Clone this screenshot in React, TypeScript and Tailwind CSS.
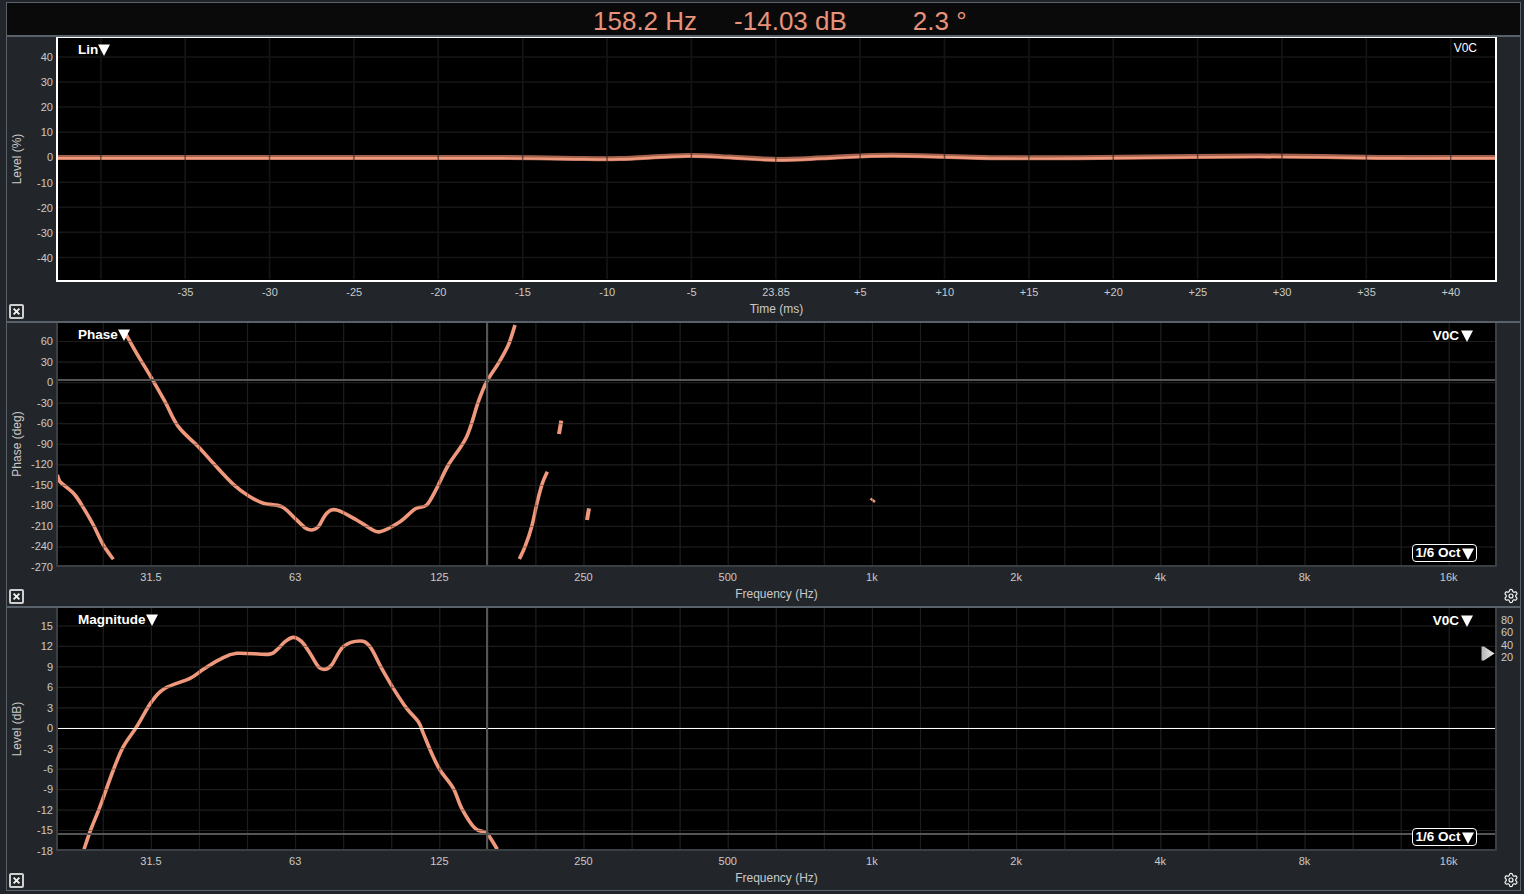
import type { ReactNode } from "react";
import { Settings } from "lucide-react";

type Pt = [number, number];

const CURVE = "#ef987b";
const FREQS = ["31.5", "63", "125", "250", "500", "1k", "2k", "4k", "8k", "16k"];
const TIMES = ["-35", "-30", "-25", "-20", "-15", "-10", "-5", "23.85", "+5", "+10", "+15", "+20", "+25", "+30", "+35", "+40"];

const range = (start: number, step: number, count: number) =>
  Array.from({ length: count }, (_, i) => start + step * i);

// catmull-rom through the traced points
function smooth(points: Pt[]) {
  let d = `M${points[0][0]} ${points[0][1]}`;
  for (let i = 0; i < points.length - 1; i++) {
    const p0 = points[i - 1] ?? points[i];
    const p1 = points[i];
    const p2 = points[i + 1];
    const p3 = points[i + 2] ?? p2;
    const c1x = p1[0] + (p2[0] - p0[0]) / 6;
    const c1y = p1[1] + (p2[1] - p0[1]) / 6;
    const c2x = p2[0] - (p3[0] - p1[0]) / 6;
    const c2y = p2[1] - (p3[1] - p1[1]) / 6;
    d += `C${c1x} ${c1y} ${c2x} ${c2y} ${p2[0]} ${p2[1]}`;
  }
  return d;
}

const zoomed = (ox: number, oy: number, pts: Pt[]): Pt[] =>
  pts.map(([x, y]) => [ox + x / 3, oy + y / 3]);

const phaseA = zoomed(50, 325, [[22, 450], [30, 470], [50, 487], [75, 510], [100, 548], [130, 600], [160, 660], [190, 703]]);
const phaseB = zoomed(50, 325, [[228, 28], [260, 85], [305, 160], [345, 230], [385, 305], [445, 365], [490, 415], [550, 478], [595, 512], [640, 535], [695, 545], [735, 580], [765, 608], [785, 615], [805, 605], [830, 565], [860, 555], [920, 585], [960, 610], [990, 620], [1050, 590], [1095, 552], [1130, 540], [1160, 490], [1195, 420], [1250, 335], [1285, 230], [1310, 170], [1345, 115], [1375, 60], [1395, 0]]);
const phaseC = zoomed(460, 320, [[178, 717], [195, 680], [215, 620], [232, 545], [247, 490], [262, 455]]);
const magnitude = zoomed(60, 610, [[72, 718], [92, 660], [120, 590], [160, 480], [190, 410], [230, 350], [275, 275], [315, 235], [390, 205], [430, 178], [480, 148], [530, 130], [625, 133], [650, 120], [675, 95], [700, 82], [725, 95], [750, 130], [775, 170], [795, 178], [815, 165], [850, 110], [900, 93], [930, 110], [965, 175], [1000, 235], [1040, 295], [1075, 335], [1090, 370], [1115, 430], [1140, 480], [1180, 535], [1205, 595], [1245, 655], [1280, 670], [1312, 718]]);
const impulse: Pt[] = [[56, 158], [300, 158], [500, 158], [583, 159], [620, 159], [687, 156], [730, 157.5], [777, 160], [830, 158], [893, 155.7], [1000, 158.2], [1100, 158], [1260, 156.6], [1400, 158], [1496, 158]];

function Triangle({ size = 12 }: { size?: number }) {
  return (
    <svg width={size} height={size} viewBox="0 0 11 11">
      <polygon points="0,0.5 11,0.5 5.5,11" fill="#fff" />
    </svg>
  );
}

function CloseBox() {
  return (
    <svg width="15" height="15" viewBox="0 0 15 15">
      <rect x="1" y="1" width="13" height="13" rx="1" fill="none" stroke="#cfcfcf" strokeWidth="2" />
      <path d="M4.6 4.6 10.4 10.4M10.4 4.6 4.6 10.4" stroke="#f0f0f0" strokeWidth="1.9" />
    </svg>
  );
}

function MenuLabel({ text }: { text: string }) {
  return (
    <div className="absolute left-[20px] top-[4px] flex items-center text-[13.5px] font-bold leading-[16px] text-white">
      {text}
      <Triangle />
    </div>
  );
}

function OctaveBox({ top }: { top: string }) {
  return (
    <div className={`absolute right-[18px] ${top} flex h-[18px] w-[65px] items-center justify-center gap-px rounded-[4px] border border-white bg-black pt-px text-[13.5px] font-bold text-white`}>
      1/6 Oct
      <Triangle />
    </div>
  );
}

function YAxis({ labels, step, offset, title, titleHeight }: { labels: string[]; step: string; offset: string; title: string; titleHeight: string }) {
  return (
    <div className="relative w-[49px] shrink-0">
      <div className={`flex flex-col items-end pr-[3px] text-[11px] text-[#c9c9c9] ${offset}`}>
        {labels.map((label) => (
          <div key={label} className={`flex items-center ${step}`}>
            {label}
          </div>
        ))}
      </div>
      <div className={`absolute left-[-20px] top-0 flex w-[60px] items-center justify-center ${titleHeight}`}>
        <span className="-rotate-90 whitespace-nowrap text-[12px] text-[#c9c9c9]">{title}</span>
      </div>
    </div>
  );
}

function BottomAxis({ labels, cell, indent, title, gear, top }: { labels: string[]; cell: string; indent: string; title: string; gear?: boolean; top: string }) {
  return (
    <div className={`relative flex-1 ${top}`}>
      <div className={`flex text-[11px] leading-[13px] text-[#c9c9c9] ${indent}`}>
        {labels.map((label) => (
          <div key={label} className={`shrink-0 text-center ${cell}`}>
            {label}
          </div>
        ))}
      </div>
      <div className="w-[1441px] pt-[3px] text-center text-[12px] leading-[14px] text-[#c9c9c9]">{title}</div>
      <div className="absolute bottom-[2px] left-[-47px] flex">
        <CloseBox />
      </div>
      {gear && <Settings size={16} color="#fff" strokeWidth={1.7} className="absolute bottom-[2px] right-[1px]" />}
    </div>
  );
}

function Grid({ xs, ys, color, top, bottom, width }: { xs: number[]; ys: number[]; color: string; top: number; bottom: number; width: number }) {
  return (
    <g stroke={color} strokeWidth={width}>
      {xs.map((x) => (
        <line key={`x${x}`} x1={x} x2={x} y1={top} y2={bottom} />
      ))}
      {ys.map((y) => (
        <line key={`y${y}`} x1={57} x2={1496} y1={y} y2={y} />
      ))}
    </g>
  );
}

// svg viewBox uses page coordinates so the traced points stay readable
function ChartSvg({ x, y, w, h, children }: { x: number; y: number; w: number; h: number; children: ReactNode }) {
  return (
    <svg width={w} height={h} viewBox={`${x} ${y} ${w} ${h}`} className="block">
      {children}
    </svg>
  );
}

const octaveXs = range(103.3, 48.07, 30);

function TimePanel() {
  const xs = range(100.8, 84.37, 17);
  const ys = range(57.5, 25.05, 9);
  return (
    <section className="flex h-[286px] border-b-2 border-[#59626a]">
      <YAxis
        title="Level (%)"
        titleHeight="h-[243px]"
        step="h-[25.05px]"
        offset="pt-[8px]"
        labels={["40", "30", "20", "10", "0", "-10", "-20", "-30", "-40"]}
      />
      <div className="flex min-w-0 flex-1 flex-col">
        <div className="relative h-[245px] w-[1441px] shrink-0 border-2 border-t-[1.5px] border-white bg-black">
          <ChartSvg x={58} y={38.5} w={1437} h={241}>
            <Grid xs={xs} ys={ys} color="#161616" top={37} bottom={282} width={1.5} />
            <path d={smooth(impulse)} fill="none" stroke="#a3634f" strokeWidth={5} />
            <path d={smooth(impulse.map(([a, b]) => [a, b + 0.8]))} fill="none" stroke={CURVE} strokeWidth={2.4} />
            <Grid xs={xs} ys={[]} color="rgba(20,20,20,.55)" top={37} bottom={282} width={1.5} />
          </ChartSvg>
          <MenuLabel text="Lin" />
          <span className="absolute right-[18px] top-[2px] text-[12px] leading-[16px] text-white">V0C</span>
        </div>
        <BottomAxis top="pt-[4px]" labels={TIMES} cell="w-[84.37px]" indent="pl-[87.3px]" title="Time (ms)" />
      </div>
    </section>
  );
}

function FrequencyChart({ children, lines, ys, y, h, height, label, menuTop }: { children: ReactNode; lines: ReactNode; ys: number[]; y: number; h: number; height: string; label: string; menuTop: string }) {
  return (
    <div className={`relative w-[1441px] shrink-0 border-b-2 border-l-2 border-r-2 border-[#3a3f44] bg-black ${height}`}>
      <ChartSvg x={58} y={y} w={1437} h={h}>
        <Grid xs={octaveXs} ys={ys} color="#1e1e1e" top={y} bottom={y + 244} width={1.2} />
        {children}
        <Grid xs={octaveXs} ys={ys} color="rgba(28,28,28,.4)" top={y} bottom={y + 244} width={1} />
        {lines}
      </ChartSvg>
      <MenuLabel text={label} />
      <div className="absolute right-[22px] top-[5px] flex items-center gap-[2px] text-[13.5px] font-bold leading-[16px] text-white">
        V0C
        <Triangle />
      </div>
      <OctaveBox top={menuTop} />
    </div>
  );
}

function Curve({ points, width = 3.6 }: { points: Pt[]; width?: number }) {
  return <path d={smooth(points)} fill="none" stroke={CURVE} strokeWidth={width} strokeLinejoin="round" />;
}

function PhasePanel() {
  return (
    <section className="flex h-[285px] border-b-2 border-[#59626a]">
      <YAxis
        title="Phase (deg)"
        titleHeight="h-[242px]"
        step="h-[20.55px]"
        offset="pt-[8px]"
        labels={["60", "30", "0", "-30", "-60", "-90", "-120", "-150", "-180", "-210", "-240", "-270"]}
      />
      <div className="flex min-w-0 flex-1 flex-col">
        <FrequencyChart
          y={323}
          h={242}
          height="h-[244px]"
          label="Phase"
          ys={range(341.5, 20.55, 11)}
          menuTop="top-[221px]"
          lines={
            <>
              <line x1={57} x2={1496} y1={380} y2={380} stroke="#555" strokeWidth={2} />
              <line x1={487} x2={487} y1={323} y2={566} stroke="#555" strokeWidth={2} />
            </>
          }
        >
          <Curve points={phaseA} />
          <Curve points={phaseB} />
          <Curve points={phaseC} />
          <Curve points={[[559, 434], [561.3, 420.7]]} width={4} />
          <Curve points={[[587, 520], [589, 508.3]]} width={4} />
          <Curve points={[[870.5, 498.5], [875, 502]]} width={2.4} />
        </FrequencyChart>
        <BottomAxis top="pt-[4px]" gear labels={FREQS} cell="w-[144.2px]" indent="pl-[22.9px]" title="Frequency (Hz)" />
      </div>
    </section>
  );
}

function MagnitudePanel() {
  return (
    <section className="flex h-[283px] border-b border-[#59626a]">
      <YAxis
        title="Level (dB)"
        titleHeight="h-[241px]"
        step="h-[20.45px]"
        offset="pt-[8px]"
        labels={["15", "12", "9", "6", "3", "0", "-3", "-6", "-9", "-12", "-15", "-18"]}
      />
      <div className="flex min-w-0 flex-1 flex-col">
        <div className="relative">
          <FrequencyChart
            y={608}
            h={241}
            height="h-[243px]"
            label="Magnitude"
            ys={range(626, 20.45, 11)}
            menuTop="top-[220px]"
            lines={
              <>
                <line x1={57} x2={1496} y1={728.5} y2={728.5} stroke="#fff" strokeWidth={1} />
                <line x1={57} x2={1496} y1={834} y2={834} stroke="#555" strokeWidth={2} />
                <line x1={487} x2={487} y1={608} y2={850} stroke="#555" strokeWidth={2} />
              </>
            }
          >
            <Curve points={magnitude} />
          </FrequencyChart>
          <svg width="14" height="15" viewBox="0 0 14 15" className="absolute left-[1425px] top-[38px]">
            <defs>
              <linearGradient id="thumb" x1="0" x2="1" y1="0" y2="0">
                <stop offset="0" stopColor="#b5b5b5" />
                <stop offset="1" stopColor="#ececec" />
              </linearGradient>
            </defs>
            <polygon points="0.5,0.5 3,0.5 13.5,7.5 3,14.5 0.5,14.5" fill="url(#thumb)" />
          </svg>
          <div className="absolute left-[1445px] top-[6px] flex flex-col text-[11px] leading-[12.3px] text-[#c9c9c9]">
            <span>80</span>
            <span>60</span>
            <span>40</span>
            <span>20</span>
          </div>
        </div>
        <BottomAxis top="pt-[4px]" gear labels={FREQS} cell="w-[144.2px]" indent="pl-[22.9px]" title="Frequency (Hz)" />
      </div>
    </section>
  );
}

export default function App() {
  return (
    <div className="h-[894px] w-[1524px] overflow-hidden bg-[#22262a] pb-[3px] pl-[6px] pr-[3px] pt-[2px] font-['Liberation_Sans',Arial,sans-serif]">
      <div className="h-full border-l border-r border-t border-[#59626a]">
        <header className="flex h-[34px] items-center border-b-2 border-[#59626a] bg-[#0a0a0a] pl-[586px] pt-[4px] text-[26px] leading-none text-[#e8927a]">
          <span>158.2 Hz</span>
          <span className="ml-[37px]">-14.03 dB</span>
          <span className="ml-[66px]">2.3 °</span>
        </header>
        <TimePanel />
        <PhasePanel />
        <MagnitudePanel />
      </div>
    </div>
  );
}
